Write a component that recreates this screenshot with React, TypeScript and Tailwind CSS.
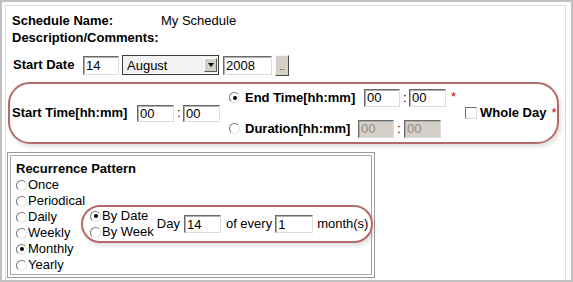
import React from "react";

const font = "font-['Liberation_Sans',Arial,sans-serif]";

function TextBox({
  value,
  w,
  h = "h-[18px]",
  disabled = false,
}: {
  value: string;
  w: string;
  h?: string;
  disabled?: boolean;
}) {
  return (
    <div
      className={`${w} ${h} shrink-0 flex items-center pl-[2px] text-[13px] leading-none border border-t-[#6b6b6b] border-l-[#6b6b6b] border-b-[#dcdcdc] border-r-[#dcdcdc] shadow-[inset_1px_1px_0_#b0b0b0] ${
        disabled ? "bg-[#d4d0c8] text-[#8c8c8c]" : "bg-white text-black"
      }`}
    >
      {value}
    </div>
  );
}

function Radio({ checked = false }: { checked?: boolean }) {
  return (
    <span className="relative inline-block w-[11px] h-[11px] shrink-0 rounded-full border border-t-[#7a7a7a] border-l-[#7a7a7a] border-b-[#e4e4e4] border-r-[#e4e4e4] bg-white">
      {checked && (
        <span className="absolute left-[2.5px] top-[2.5px] w-[4px] h-[4px] rounded-full bg-black" />
      )}
    </span>
  );
}

function Star() {
  return <span className="self-start text-[#e00000] text-[13px] leading-none ml-[5px] mt-[1px]">*</span>;
}

export default function App() {
  return (
    <div className={`w-[573px] h-[282px] overflow-hidden bg-white border-2 border-[#c0c0c0] ${font} text-black whitespace-nowrap`}>
      <div className="ml-[3px] mt-[3px] mr-[5px] h-full border-l border-t border-r border-[#dedede]">
        <div className="pt-[6px] pl-[6px] text-[13px]">
          <div className="flex leading-[17px]">
            <span className="w-[149px] font-bold">Schedule Name:</span>
            <span>My Schedule</span>
          </div>
          <div className="leading-[17px] font-bold">Description/Comments:</div>

          {/* start date */}
          <div className="flex items-center h-[20px] mt-[9px] ml-[1px]">
            <span className="w-[70px] font-bold leading-4">Start Date</span>
            <TextBox value="14" w="w-[36px]" h="h-[19px]" />
            <div className="ml-[3px] w-[97px] h-[20px] flex items-center justify-between border border-[#3c3c3c] bg-[#f2f2f2] pl-[4px] pr-[1px]">
              <span className="leading-none">August</span>
              <span className="w-[13px] h-[14px] flex items-center justify-center bg-[#d4d0c8] border border-t-white border-l-white border-b-[#5a5a5a] border-r-[#5a5a5a]">
                <span className="w-0 h-0 border-l-[3.5px] border-r-[3.5px] border-t-[4px] border-l-transparent border-r-transparent border-t-black" />
              </span>
            </div>
            <div className="ml-[4px]">
              <TextBox value="2008" w="w-[49px]" h="h-[19px]" />
            </div>
            <div className="ml-[3px] w-[14px] h-[21px] flex items-end justify-center pb-[3px] bg-[#d4d0c8] border border-t-[#f4f4f4] border-l-[#f4f4f4] border-b-[#4a4a4a] border-r-[#4a4a4a] text-[9px] leading-none">
              ..
            </div>
          </div>
        </div>

        {/* start time group */}
        <div className="ml-[2px] mt-[7px] w-[551px] h-[62px] rounded-[22px] border-2 border-[#b46a6a] shadow-[2px_3px_4px_rgba(0,0,0,0.12)] flex items-center text-[13px]">
          <span className="ml-[2px] w-[125px] shrink-0 font-bold leading-4">Start Time[hh:mm]</span>
          <TextBox value="00" w="w-[37px]" h="h-[17px]" />
          <span className="mx-[3px] w-[3px] leading-4">:</span>
          <TextBox value="00" w="w-[37px]" h="h-[17px]" />
          <div className="ml-[9px] w-[236px] shrink-0 flex flex-col gap-[13px]">
            <div className="flex items-center h-[18px]">
              <Radio checked />
              <span className="ml-[5px] w-[119px] shrink-0 font-bold leading-4">End Time[hh:mm]</span>
              <TextBox value="00" w="w-[36px]" />
              <span className="mx-[3px] w-[3px] leading-4">:</span>
              <TextBox value="00" w="w-[37px]" />
              <Star />
            </div>
            <div className="flex items-center h-[18px]">
              <Radio />
              <span className="ml-[5px] w-[113px] shrink-0 font-bold leading-4">Duration[hh:mm]</span>
              <TextBox value="00" w="w-[36px]" disabled />
              <span className="ml-[3px] mr-[4px] w-[3px] leading-4">:</span>
              <TextBox value="00" w="w-[37px]" disabled />
            </div>
          </div>
          <div className="flex items-center">
            <span className="w-[12px] h-[12px] bg-white border border-t-[#6b6b6b] border-l-[#6b6b6b] border-b-[#dcdcdc] border-r-[#dcdcdc]" />
            <span className="ml-[3px] font-bold leading-4">Whole Day</span>
            <Star />
          </div>
        </div>

        {/* recurrence */}
        <div className="ml-[1px] mt-[8px] w-[368px] h-[126px] border border-[#9a9a9a] p-[2px]">
          <div className="h-full border border-[#a8a8a8] pl-[5px] pt-[4px] text-[13px]">
            <div className="font-bold leading-[17px]">Recurrence Pattern</div>
            <div className="flex">
              <div className="w-[65px] shrink-0 flex flex-col">
                {["Once", "Periodical", "Daily", "Weekly", "Monthly", "Yearly"].map((t) => (
                  <div key={t} className="flex items-center h-[16px] leading-4">
                    <Radio checked={t === "Monthly"} />
                    <span className="ml-[1px]">{t}</span>
                  </div>
                ))}
              </div>
              <div className="mt-[28px] w-[292px] h-[38px] shrink-0 rounded-[20px] border-2 border-[#b46a6a] shadow-[2px_3px_4px_rgba(0,0,0,0.12)] flex items-center pl-[7px]">
                <div className="flex flex-col shrink-0">
                  <div className="flex items-center h-[16px] leading-4">
                    <Radio checked />
                    <span className="ml-[1px]">By Date</span>
                  </div>
                  <div className="flex items-center h-[16px] leading-4">
                    <Radio />
                    <span className="ml-[1px]">By Week</span>
                  </div>
                </div>
                <span className="ml-[3px] leading-4">Day</span>
                <div className="ml-[4px]">
                  <TextBox value="14" w="w-[37px]" />
                </div>
                <span className="ml-[5px] leading-4">of every</span>
                <div className="ml-[3px]">
                  <TextBox value="1" w="w-[38px]" />
                </div>
                <span className="ml-[4px] leading-4">month(s)</span>
              </div>
            </div>
          </div>
        </div>
      </div>
    </div>
  );
}
